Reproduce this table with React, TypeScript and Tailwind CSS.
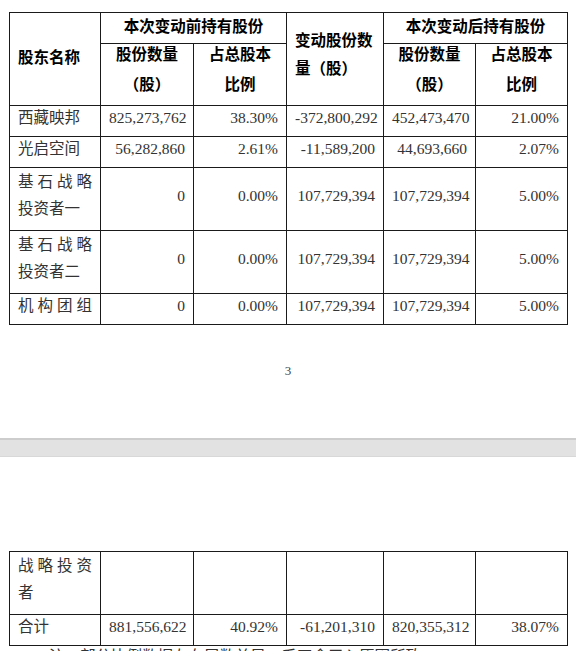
import React from 'react';

const serif = "font-['Liberation_Serif','Noto_Sans_CJK_SC',serif]";
const hei = "font-['Noto_Sans_CJK_SC','Liberation_Sans',sans-serif]";

const cell = 'border border-[#1a1a1a] px-[8px] py-0 align-middle';
const body = `${cell} ${serif} text-[15.5px] text-[#333] leading-[22px] pb-[7px]`;
const num = `${body} text-right`;
const head = `${cell} ${hei} text-[15.5px] font-bold text-black text-center leading-[22px] pb-[7px]`;
const spread = '[text-align:justify] [text-align-last:justify]';
const twoLine = '[text-align:justify] leading-[27px] pb-[8px]';

function Cols() {
  return (
    <colgroup>
      <col className="w-[91px]" />
      <col className="w-[93px]" />
      <col className="w-[93px]" />
      <col className="w-[97px]" />
      <col className="w-[92px]" />
      <col className="w-[92px]" />
    </colgroup>
  );
}

type Row = { name: string; two?: boolean; wide?: boolean; before: string; pct: string; diff: string; after: string; afterPct: string };

const rows: Row[] = [
  { name: '西藏映邦', before: '825,273,762', pct: '38.30%', diff: '-372,800,292', after: '452,473,470', afterPct: '21.00%' },
  { name: '光启空间', before: '56,282,860', pct: '2.61%', diff: '-11,589,200', after: '44,693,660', afterPct: '2.07%' },
  { name: '基石战略投资者一', two: true, before: '0', pct: '0.00%', diff: '107,729,394', after: '107,729,394', afterPct: '5.00%' },
  { name: '基石战略投资者二', two: true, before: '0', pct: '0.00%', diff: '107,729,394', after: '107,729,394', afterPct: '5.00%' },
  { name: '机构团组', wide: true, before: '0', pct: '0.00%', diff: '107,729,394', after: '107,729,394', afterPct: '5.00%' },
];

function SubHead({ a, b }: { a: string; b: string }) {
  return (
    <th className={`${head} pb-0`}>
      <div className="leading-[30px] -mt-[6px]">
        {a}
        <br />
        {b}
      </div>
    </th>
  );
}

export default function App() {
  return (
    <div className="w-[576px] h-[651px] overflow-hidden bg-white">
      <section className="h-[438px] pt-[12px] pl-[9px]">
        <table className="table-fixed border-collapse w-[559px]">
          <Cols />
          <thead>
            <tr className="h-[31px]">
              <th rowSpan={2} className={`${head} text-left pb-[6px]`}>股东名称</th>
              <th colSpan={2} className={head}>本次变动前持有股份</th>
              <th rowSpan={2} className={`${head} text-left leading-[28px] pb-[12px]`}>
                变动股份数<br />量（股）
              </th>
              <th colSpan={2} className={head}>本次变动后持有股份</th>
            </tr>
            <tr className="h-[61px]">
              <SubHead a="股份数量" b="（股）" />
              <SubHead a="占总股本" b="比例" />
              <SubHead a="股份数量" b="（股）" />
              <SubHead a="占总股本" b="比例" />
            </tr>
          </thead>
          <tbody>
            {rows.map((r) => (
              <tr key={r.name} className={r.two ? 'h-[62px]' : 'h-[31px]'}>
                <td className={`${body} ${r.two ? twoLine : ''} ${r.wide ? spread : ''}`}>{r.name}</td>
                <td className={num}>{r.before}</td>
                <td className={num}>{r.pct}</td>
                <td className={num}>{r.diff}</td>
                <td className={num}>{r.after}</td>
                <td className={num}>{r.afterPct}</td>
              </tr>
            ))}
          </tbody>
        </table>
        <div className="mt-[39px] pr-[9px] text-center font-['Liberation_Serif',serif] text-[13px] leading-[13px] text-[#444]">3</div>
      </section>

      <div className="h-[19px] border-t-[2px] border-t-[#cdcdcd] border-b border-b-[#d8d8d8] bg-[#e1e2e1]" />

      <section className="pt-[94px] pl-[9px]">
        <table className="table-fixed border-collapse w-[559px]">
          <Cols />
          <tbody>
            <tr className="h-[61px]">
              <td className={`${body} ${twoLine} pb-[7px]`}>战略投资者</td>
              <td className={num} />
              <td className={num} />
              <td className={num} />
              <td className={num} />
              <td className={num} />
            </tr>
            <tr className="h-[31px]">
              <td className={body}>合计</td>
              <td className={num}>881,556,622</td>
              <td className={num}>40.92%</td>
              <td className={num}>-61,201,310</td>
              <td className={num}>820,355,312</td>
              <td className={num}>38.07%</td>
            </tr>
          </tbody>
        </table>
        <p className={`${serif} mt-[1px] pl-[40px] text-[15.5px] leading-[20px] text-[#333]`}>
          注：部分比例数据存在尾数差异，系四舍五入原因所致。
        </p>
      </section>
    </div>
  );
}
